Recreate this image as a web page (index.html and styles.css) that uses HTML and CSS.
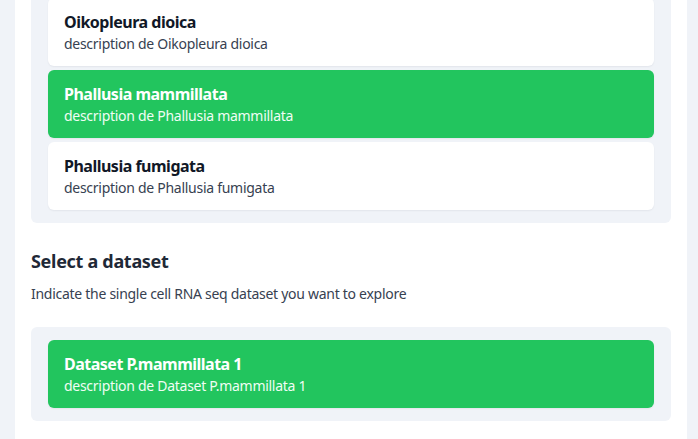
FILE: index.html
```html
<!DOCTYPE html>
<html lang="en">
<head>
<meta charset="utf-8">
<title>Select organism and dataset</title>
<link rel="stylesheet" href="styles.css">
</head>
<body>
<main class="panel">
  <div class="choices choices-first">
    <div class="card">
      <div class="card-title">Oikopleura dioica</div>
      <div class="card-desc">description de Oikopleura dioica</div>
    </div>
    <div class="card card-selected">
      <div class="card-title">Phallusia mammillata</div>
      <div class="card-desc">description de Phallusia mammillata</div>
    </div>
    <div class="card">
      <div class="card-title">Phallusia fumigata</div>
      <div class="card-desc">description de Phallusia fumigata</div>
    </div>
  </div>

  <section class="step">
    <h2 class="step-title">Select a dataset</h2>
    <p class="step-desc">Indicate the single cell RNA seq dataset you want to explore</p>
    <div class="choices">
      <div class="card card-selected">
        <div class="card-title">Dataset P.mammillata 1</div>
        <div class="card-desc">description de Dataset P.mammillata 1</div>
      </div>
    </div>
  </section>
</main>
</body>
</html>
```

FILE: styles.css
```css
* { box-sizing: border-box; }
html, body {
  margin: 0;
  height: 100%;
  overflow: hidden;
}
body {
  background: #f0f3f8;
  font-family: "Noto Sans", "Open Sans", sans-serif;
  color: #1f2937;
}
.panel {
  display: flow-root;
  margin-left: 15px;
  width: 672px;
  min-height: 100%;
  background: #ffffff;
  padding: 0 16px;
}
.choices {
  background: #f0f3f8;
  border-radius: 6px;
  padding: 13px 17px;
  display: flex;
  flex-direction: column;
  gap: 4px;
}
.choices-first {
  margin-top: -15px;
  border-top-left-radius: 0;
  border-top-right-radius: 0;
}
.card {
  background: #ffffff;
  border-radius: 6px;
  padding: 12px 16px;
  box-shadow: 0 1px 2px rgba(15, 23, 42, 0.06);
}
.card-title {
  font-size: 16px;
  line-height: 24px;
  font-weight: 700;
  letter-spacing: -0.5px;
  color: #111827;
}
.card-desc {
  font-size: 14px;
  line-height: 20px;
  letter-spacing: -0.28px;
  color: #374151;
}
.card-selected {
  background: #22c55e;
}
.card-selected .card-title { color: #ffffff; }
.card-selected .card-desc { color: #f0fdf4; }
.step {
  padding-top: 24px;
}
.step-title {
  margin: 0;
  font-size: 18px;
  line-height: 28px;
  font-weight: 700;
  letter-spacing: -0.3px;
  color: #1f2937;
}
.step-desc {
  margin: 9px 0 23px;
  font-size: 14px;
  line-height: 20px;
  letter-spacing: -0.28px;
  color: #374151;
}
```
